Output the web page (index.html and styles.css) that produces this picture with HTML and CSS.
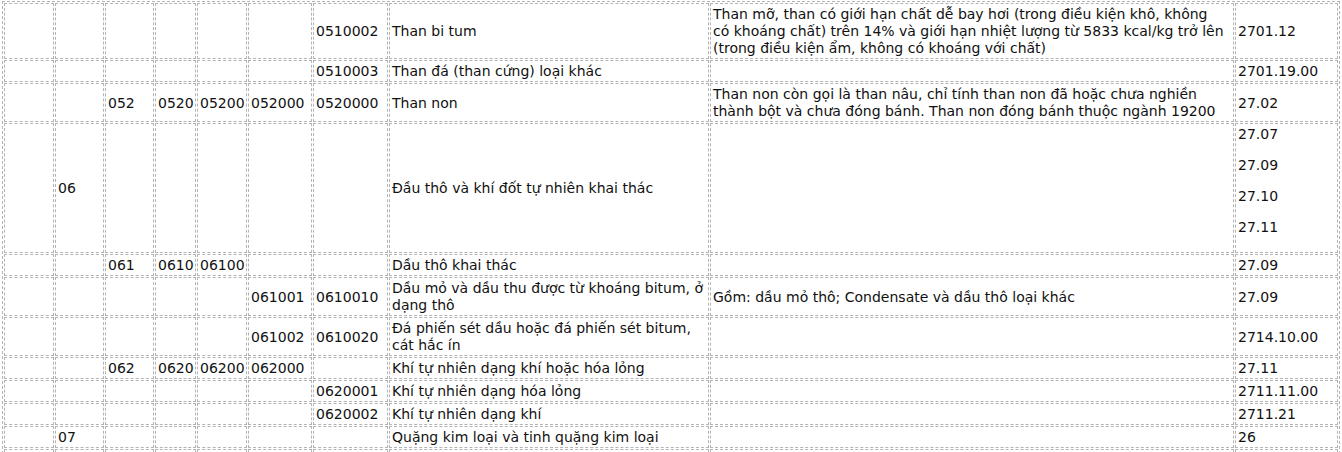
FILE: index.html
```html
<!DOCTYPE html>
<html lang="vi">
<head>
<meta charset="utf-8">
<title>Hệ thống ngành sản phẩm</title>
<link rel="stylesheet" href="styles.css">
</head>
<body>
<table class="codes">
  <colgroup>
    <col class="c1"><col class="c2"><col class="c3"><col class="c4"><col class="c5">
    <col class="c6"><col class="c7"><col class="c8"><col class="c9"><col class="c10">
  </colgroup>
  <tbody>
    <tr>
      <td></td><td></td><td></td><td></td><td></td><td></td>
      <td>0510002</td>
      <td class="txt">Than bi tum</td>
      <td class="txt">Than mỡ, than có giới hạn chất dễ bay hơi (trong điều kiện khô, không<br>có khoáng chất) trên 14% và giới hạn nhiệt lượng từ 5833 kcal/kg trở lên (trong điều kiện ẩm, không có khoáng với chất)</td>
      <td>2701.12</td>
    </tr>
    <tr>
      <td></td><td></td><td></td><td></td><td></td><td></td>
      <td>0510003</td>
      <td class="txt">Than đá (than cứng) loại khác</td>
      <td class="txt"></td>
      <td>2701.19.00</td>
    </tr>
    <tr>
      <td></td><td></td>
      <td>052</td><td>0520</td><td>05200</td><td>052000</td><td>0520000</td>
      <td class="txt">Than non</td>
      <td class="txt">Than non còn gọi là than nâu, chỉ tính than non đã hoặc chưa nghiền thành bột và chưa đóng bánh. Than non đóng bánh thuộc ngành 19200</td>
      <td>27.02</td>
    </tr>
    <tr>
      <td></td>
      <td>06</td>
      <td></td><td></td><td></td><td></td><td></td>
      <td class="txt">Đầu thô và khí đốt tự nhiên khai thác</td>
      <td class="txt"></td>
      <td><p class="hs">27.07</p><p class="hs">27.09</p><p class="hs">27.10</p><p class="hs">27.11</p></td>
    </tr>
    <tr>
      <td></td><td></td>
      <td>061</td><td>0610</td><td>06100</td><td></td><td></td>
      <td class="txt">Dầu thô khai thác</td>
      <td class="txt"></td>
      <td>27.09</td>
    </tr>
    <tr>
      <td></td><td></td><td></td><td></td><td></td>
      <td>061001</td><td>0610010</td>
      <td class="txt">Dầu mỏ và dầu thu được từ khoáng bitum, ở dạng thô</td>
      <td class="txt">Gồm: dầu mỏ thô; Condensate và dầu thô loại khác</td>
      <td>27.09</td>
    </tr>
    <tr>
      <td></td><td></td><td></td><td></td><td></td>
      <td>061002</td><td>0610020</td>
      <td class="txt">Đá phiến sét dầu hoặc đá phiến sét bitum, cát hắc ín</td>
      <td class="txt"></td>
      <td>2714.10.00</td>
    </tr>
    <tr>
      <td></td><td></td>
      <td>062</td><td>0620</td><td>06200</td><td>062000</td><td></td>
      <td class="txt">Khí tự nhiên dạng khí hoặc hóa lỏng</td>
      <td class="txt"></td>
      <td>27.11</td>
    </tr>
    <tr>
      <td></td><td></td><td></td><td></td><td></td><td></td>
      <td>0620001</td>
      <td class="txt">Khí tự nhiên dạng hóa lỏng</td>
      <td class="txt"></td>
      <td>2711.11.00</td>
    </tr>
    <tr>
      <td></td><td></td><td></td><td></td><td></td><td></td>
      <td>0620002</td>
      <td class="txt">Khí tự nhiên dạng khí</td>
      <td class="txt"></td>
      <td>2711.21</td>
    </tr>
    <tr>
      <td></td>
      <td>07</td>
      <td></td><td></td><td></td><td></td><td></td>
      <td class="txt">Quặng kim loại và tinh quặng kim loại</td>
      <td class="txt"></td>
      <td>26</td>
    </tr>
    <tr class="more">
      <td></td><td></td><td></td><td></td><td></td><td></td><td></td>
      <td class="txt"></td>
      <td class="txt"></td>
      <td></td>
    </tr>
  </tbody>
</table>
</body>
</html>
```
FILE: styles.css
```css
html, body {
  background: #ffffff;
}
body {
  margin: 1px 0 0 2px;
  font-family: "DejaVu Sans", Verdana, sans-serif;
  font-size: 14px;
  line-height: 17px;
  color: #111111;
}
.codes {
  table-layout: fixed;
  width: 1338px;
  border: 1px dashed #b4b4b4;
  border-collapse: separate;
  border-spacing: 1px;
}
.codes td {
  box-sizing: border-box;
  border: 1px dashed #b4b4b4;
  padding: 2px 2px 1px;
  vertical-align: middle;
  text-align: left;
  white-space: nowrap;
}
.codes td.txt {
  white-space: normal;
  overflow-wrap: break-word;
}
.codes .more td {
  height: 23px;
}
.c1 { width: 50px; }
.c2 { width: 49px; }
.c3 { width: 49px; }
.c4 { width: 41px; }
.c5 { width: 50px; }
.c6 { width: 64px; }
.c7 { width: 75px; }
.c8 { width: 320px; }
.c9 { width: 524px; }
.c10 { width: 103px; }
.hs {
  margin: 0 0 14px;
}
.hs:last-child {
  margin-bottom: 15px;
}
```
